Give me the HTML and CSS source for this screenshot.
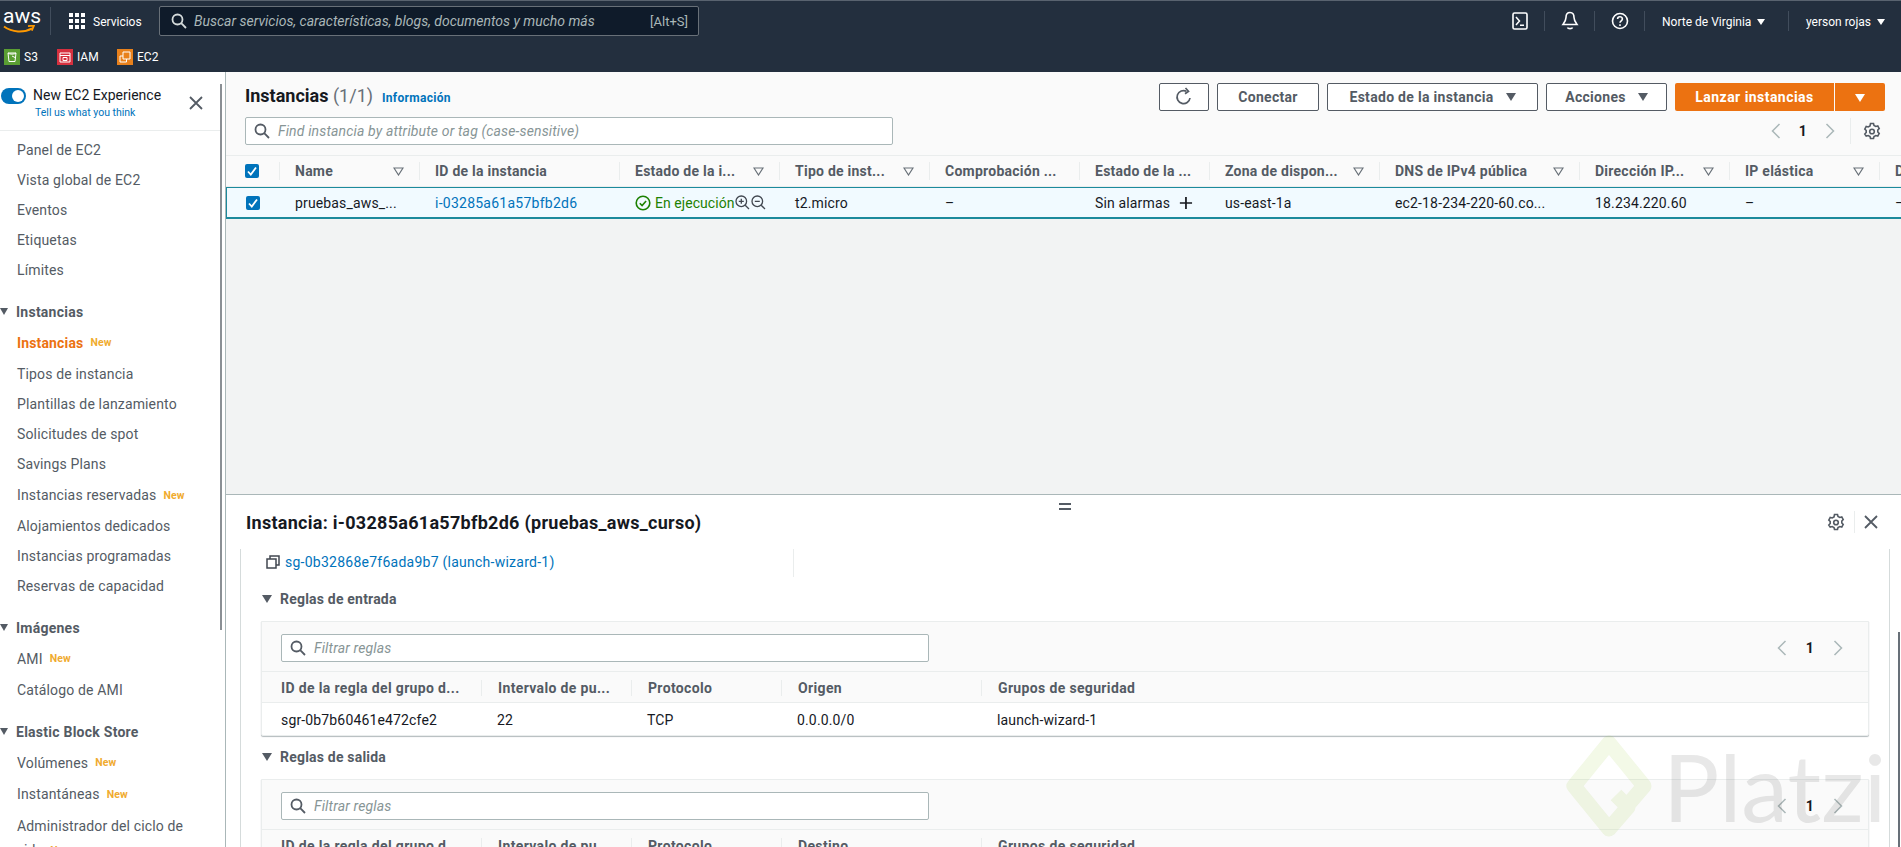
FILE: index.html
```html
<!DOCTYPE html>
<html lang="es">
<head>
    <meta charset="UTF-8">
    <title>Instancias | EC2 Management Console</title>
    <link rel="stylesheet" href="styles.css">
</head>
<body>
    <header class="topnav">
        <div class="nav-main">
            <div class="aws-logo">
                <span class="aws-word">aws</span>
                <svg class="aws-smile" width="32" height="9" viewBox="0 0 32 9"><path d="M1 1.500c8 6 20 6.500 28 1.800" fill="none" stroke="#f90" stroke-width="2"/><path d="M25 1.200l6-.7-2.200 5.200" fill="none" stroke="#f90" stroke-width="1.800"/></svg>
            </div>
            <div class="nav-services">
                <svg width="16" height="16" viewBox="0 0 16 16" fill="#fff"><rect width="4" height="4"/><rect x="6" width="4" height="4"/><rect x="12" width="4" height="4"/><rect y="6" width="4" height="4"/><rect x="6" y="6" width="4" height="4"/><rect x="12" y="6" width="4" height="4"/><rect y="12" width="4" height="4"/><rect x="6" y="12" width="4" height="4"/><rect x="12" y="12" width="4" height="4"/></svg>
                <span>Servicios</span>
            </div>
            <div class="nav-search">
                <svg width="16" height="16" viewBox="0 0 16 16" fill="none" stroke="#d5dbdb" stroke-width="1.800"><circle cx="6.500" cy="6.500" r="5"/><path d="M10.200 10.200L15 15"/></svg>
                <span class="nav-search-text">Buscar servicios, características, blogs, documentos y mucho más</span>
                <span class="nav-search-key">[Alt+S]</span>
            </div>
            <div class="nav-right">
                <div class="nav-icon">
                    <svg width="16" height="18" viewBox="0 0 16 18" fill="none" stroke="#fff"><rect x="1" y="1" width="14" height="16" rx="1.500" stroke-width="1.600"/><path d="M4 5l3.500 4L4 13M8 13.300h4" stroke-width="1.500"/></svg>
                </div>
                <div class="nav-icon">
                    <svg width="18" height="20" viewBox="0 0 18 20" fill="none" stroke="#fff" stroke-width="1.600"><path d="M9 1.500c-3 0-4 2.500-4 5 0 3-1.500 5-3 7h14c-1.500-2-3-4-3-7 0-2.500-1-5-4-5z"/><path d="M6.500 16.500c.5 1.500 4.500 1.500 5 0"/></svg>
                </div>
                <div class="nav-icon">
                    <svg width="18" height="18" viewBox="0 0 18 18" fill="none" stroke="#fff" stroke-width="1.600"><circle cx="9" cy="9" r="7.500"/><path d="M6.600 7c0-3 4.800-3 4.800 0 0 1.800-2.400 1.800-2.400 3.800"/><path d="M9 12.300v1.600"/></svg>
                </div>
                <div class="nav-menu nav-region">Norte de Virginia<i class="tri tri-white"></i></div>
                <div class="nav-menu nav-user">yerson rojas<i class="tri tri-white"></i></div>
            </div>
        </div>
        <div class="nav-shortcuts">
            <div class="shortcut">
                <svg width="16" height="16" viewBox="0 0 16 16"><rect width="16" height="16" fill="#5a9e33"/><path d="M4 4h8l-1 8.500H5zM4 4c1 1.500 7 1.500 8 0M8 7l4 2" fill="none" stroke="#fff"/></svg>
                <span>S3</span>
            </div>
            <div class="shortcut shortcut-iam">
                <svg width="16" height="16" viewBox="0 0 16 16"><rect width="16" height="16" fill="#d6303f"/><path d="M3 4h10v9H3zM3 6.500h10M6 8.500h4v3H6z" fill="none" stroke="#fff"/></svg>
                <span>IAM</span>
            </div>
            <div class="shortcut shortcut-ec2">
                <svg width="16" height="16" viewBox="0 0 16 16"><rect width="16" height="16" fill="#e8811c"/><path d="M6 3h7v7H6zM9.500 10v3H3V7h3" fill="none" stroke="#fff"/></svg>
                <span>EC2</span>
            </div>
        </div>
    </header>

    <div class="app">
        <aside class="sidebar">
            <div class="side-head">
                <i class="toggle"></i>
                <div class="side-head-text">
                    <div class="side-title">New EC2 Experience</div>
                    <div class="side-sub">Tell us what you think</div>
                </div>
                <svg class="side-close" width="14" height="14" viewBox="0 0 14 14" fill="none" stroke="#545b64" stroke-width="1.800"><path d="M1 1l12 12M13 1L1 13"/></svg>
            </div>
            <nav class="side-nav">
                <a class="item">Panel de EC2</a>
                <a class="item">Vista global de EC2</a>
                <a class="item">Eventos</a>
                <a class="item">Etiquetas</a>
                <a class="item">Límites</a>
                <div class="group"><i class="tri tri-side"></i>Instancias</div>
                <a class="item item-new active">Instancias<b class="new">New</b></a>
                <a class="item item-new">Tipos de instancia</a>
                <a class="item">Plantillas de lanzamiento</a>
                <a class="item">Solicitudes de spot</a>
                <a class="item">Savings Plans</a>
                <a class="item item-tall">Instancias reservadas<b class="new">New</b></a>
                <a class="item">Alojamientos dedicados</a>
                <a class="item">Instancias programadas</a>
                <a class="item">Reservas de capacidad</a>
                <div class="group"><i class="tri tri-side"></i>Imágenes</div>
                <a class="item item-new">AMI<b class="new">New</b></a>
                <a class="item item-new">Catálogo de AMI</a>
                <div class="group"><i class="tri tri-side"></i>Elastic Block Store</div>
                <a class="item item-new">Volúmenes<b class="new">New</b></a>
                <a class="item item-tall">Instantáneas<b class="new">New</b></a>
                <a class="item item-new">Administrador del ciclo de</a>
                <a class="item item-wrap">vida<b class="new">New</b></a>
            </nav>
            <i class="side-scroll"></i>
        </aside>

        <main class="content">
            <section class="top-panel">
                <div class="list-head">
                    <div class="list-row">
                        <h1 class="list-title">Instancias <span class="count">(1/1)</span><a class="info">Información</a></h1>
                        <div class="actions">
                            <button class="btn btn-icon">
                                <svg width="18" height="20" viewBox="0 0 18 20" fill="none" stroke="#545b64" stroke-width="1.700"><path d="M15 11a6.500 6.500 0 1 1-3.500-6.700"/><path d="M10.500 1l3 3.300-3.500 2.500"/></svg>
                            </button>
                            <button class="btn btn-conectar">Conectar</button>
                            <button class="btn btn-estado">Estado de la instancia<i class="tri tri-btn"></i></button>
                            <button class="btn btn-acciones">Acciones<i class="tri tri-btn"></i></button>
                            <div class="launch">
                                <button class="btn-launch">Lanzar instancias</button>
                                <button class="btn-launch-arrow"><i class="tri tri-btn tri-white"></i></button>
                            </div>
                        </div>
                    </div>
                    <div class="list-row list-row-2">
                        <div class="filter filter-main">
                            <svg width="16" height="16" viewBox="0 0 16 16" fill="none" stroke="#545b64" stroke-width="1.800"><circle cx="6.500" cy="6.500" r="5"/><path d="M10.200 10.200L15 15"/></svg>
                            <span>Find instancia by attribute or tag (case-sensitive)</span>
                        </div>
                        <div class="pager pager-main">
                            <svg class="chev" width="10" height="16" viewBox="0 0 10 16"><path d="M8.500 1L1.500 8l7 7"/></svg>
                            <b>1</b>
                            <svg class="chev" width="10" height="16" viewBox="0 0 10 16"><path d="M1.500 1l7 7-7 7"/></svg>
                            <i class="pager-sep"></i>
                            <svg width="18" height="18" viewBox="0 0 18 18" fill="none" stroke="#545b64" stroke-width="1.600"><path d="M7.500 1.500h3l.5 2 1.800 1 2-.6 1.400 2.600-1.400 1.500v2l1.400 1.500-1.400 2.600-2-.6-1.800 1-.5 2h-3l-.5-2-1.800-1-2 .6L1.800 12l1.400-1.500v-2L1.800 7l1.400-2.600 2 .6 1.800-1z"/><circle cx="9" cy="9.500" r="2.300"/></svg>
                        </div>
                    </div>
                </div>
                <div class="grid-table">
                    <div class="tr thead">
                        <div class="td td-check"><svg class="check" width="14" height="14" viewBox="0 0 14 14"><rect width="14" height="14" rx="2" fill="#0073bb"/><path d="M3 7.500l2.800 3L11 3.500" fill="none" stroke="#fff" stroke-width="1.800"/></svg></div>
                        <div class="td sortable"><span>Name</span><svg class="sort" width="11" height="9" viewBox="0 0 11 9"><path d="M1 1h9L5.500 8z"/></svg></div>
                        <div class="td"><span>ID de la instancia</span></div>
                        <div class="td sortable"><span>Estado de la i...</span><svg class="sort" width="11" height="9" viewBox="0 0 11 9"><path d="M1 1h9L5.500 8z"/></svg></div>
                        <div class="td sortable"><span>Tipo de inst...</span><svg class="sort" width="11" height="9" viewBox="0 0 11 9"><path d="M1 1h9L5.500 8z"/></svg></div>
                        <div class="td"><span>Comprobación ...</span></div>
                        <div class="td"><span>Estado de la ...</span></div>
                        <div class="td sortable"><span>Zona de dispon...</span><svg class="sort" width="11" height="9" viewBox="0 0 11 9"><path d="M1 1h9L5.500 8z"/></svg></div>
                        <div class="td sortable"><span>DNS de IPv4 pública</span><svg class="sort" width="11" height="9" viewBox="0 0 11 9"><path d="M1 1h9L5.500 8z"/></svg></div>
                        <div class="td sortable"><span>Dirección IP...</span><svg class="sort" width="11" height="9" viewBox="0 0 11 9"><path d="M1 1h9L5.500 8z"/></svg></div>
                        <div class="td sortable"><span>IP elástica</span><svg class="sort" width="11" height="9" viewBox="0 0 11 9"><path d="M1 1h9L5.500 8z"/></svg></div>
                        <div class="td"><span>D</span></div>
                    </div>
                    <div class="tr selected">
                        <div class="td td-check"><svg class="check" width="14" height="14" viewBox="0 0 14 14"><rect width="14" height="14" rx="2" fill="#0073bb"/><path d="M3 7.500l2.800 3L11 3.500" fill="none" stroke="#fff" stroke-width="1.800"/></svg></div>
                        <div class="td"><span>pruebas_aws_...</span></div>
                        <div class="td"><a class="link">i-03285a61a57bfb2d6</a></div>
                        <div class="td td-status">
                            <svg width="16" height="16" viewBox="0 0 16 16" fill="none" stroke="#1d8102" stroke-width="1.600"><circle cx="8" cy="8" r="6.800"/><path d="M4.800 8.200l2.300 2.400 4-4.600"/></svg>
                            <span class="running">En ejecución</span>
                            <svg class="zoom-icon" width="15" height="15" viewBox="0 0 15 15" fill="none" stroke="#414750" stroke-width="1.300"><circle cx="6.300" cy="6.300" r="5.300"/><path d="M10.200 10.200L14 14M3.800 6.300h5M6.300 3.800v5"/></svg>
                            <svg class="zoom-icon" width="15" height="15" viewBox="0 0 15 15" fill="none" stroke="#414750" stroke-width="1.300"><circle cx="6.300" cy="6.300" r="5.300"/><path d="M10.200 10.200L14 14M3.800 6.300h5"/></svg>
                        </div>
                        <div class="td"><span>t2.micro</span></div>
                        <div class="td"><span>–</span></div>
                        <div class="td td-alarm"><span>Sin alarmas</span><svg width="16" height="16" viewBox="0 0 16 16" stroke="#16191f" stroke-width="2"><path d="M8 1v14M1 8h14"/></svg></div>
                        <div class="td"><span>us-east-1a</span></div>
                        <div class="td"><span>ec2-18-234-220-60.co...</span></div>
                        <div class="td"><span>18.234.220.60</span></div>
                        <div class="td"><span>–</span></div>
                        <div class="td"><span>–</span></div>
                    </div>
                </div>
            </section>

            <section class="detail">
                <div class="split-handle"></div>
                <div class="detail-head">
                    <h2 class="detail-title">Instancia: i-03285a61a57bfb2d6 (pruebas_aws_curso)</h2>
                    <div class="detail-tools">
                        <svg width="18" height="18" viewBox="0 0 18 18" fill="none" stroke="#545b64" stroke-width="1.600"><path d="M7.500 1.500h3l.5 2 1.800 1 2-.6 1.400 2.600-1.400 1.500v2l1.400 1.500-1.400 2.600-2-.6-1.800 1-.5 2h-3l-.5-2-1.800-1-2 .6L1.800 12l1.400-1.500v-2L1.800 7l1.400-2.600 2 .6 1.800-1z"/><circle cx="9" cy="9.500" r="2.300"/></svg>
                        <i class="tools-sep"></i>
                        <svg width="14" height="14" viewBox="0 0 14 14" fill="none" stroke="#545b64" stroke-width="1.800"><path d="M1 1l12 12M13 1L1 13"/></svg>
                    </div>
                </div>
                <div class="detail-body">
                    <div class="sg-row">
                        <div class="sg-cell">
                            <svg width="14" height="14" viewBox="0 0 14 14" fill="none" stroke="#414750" stroke-width="1.500"><rect x="1" y="4" width="9" height="9"/><path d="M4 4V1h9v9h-3"/></svg>
                            <a class="link">sg-0b32868e7f6ada9b7 (launch-wizard-1)</a>
                        </div>
                    </div>

                    <div class="rules-title"><i class="tri tri-btn"></i>Reglas de entrada</div>
                    <div class="rules-card">
                        <div class="rules-tool">
                            <div class="filter filter-rules">
                                <svg width="16" height="16" viewBox="0 0 16 16" fill="none" stroke="#545b64" stroke-width="1.800"><circle cx="6.500" cy="6.500" r="5"/><path d="M10.200 10.200L15 15"/></svg>
                                <span>Filtrar reglas</span>
                            </div>
                            <div class="pager pager-rules">
                                <svg class="chev" width="10" height="16" viewBox="0 0 10 16"><path d="M8.500 1L1.500 8l7 7"/></svg>
                                <b>1</b>
                                <svg class="chev" width="10" height="16" viewBox="0 0 10 16"><path d="M1.500 1l7 7-7 7"/></svg>
                            </div>
                        </div>
                        <div class="rules-tr rules-head">
                            <div class="rules-td">ID de la regla del grupo d...</div>
                            <div class="rules-td">Intervalo de pu...</div>
                            <div class="rules-td">Protocolo</div>
                            <div class="rules-td">Origen</div>
                            <div class="rules-td">Grupos de seguridad</div>
                        </div>
                        <div class="rules-tr">
                            <div class="rules-td">sgr-0b7b60461e472cfe2</div>
                            <div class="rules-td">22</div>
                            <div class="rules-td">TCP</div>
                            <div class="rules-td">0.0.0.0/0</div>
                            <div class="rules-td">launch-wizard-1</div>
                        </div>
                    </div>

                    <div class="rules-title"><i class="tri tri-btn"></i>Reglas de salida</div>
                    <div class="rules-card">
                        <div class="rules-tool">
                            <div class="filter filter-rules">
                                <svg width="16" height="16" viewBox="0 0 16 16" fill="none" stroke="#545b64" stroke-width="1.800"><circle cx="6.500" cy="6.500" r="5"/><path d="M10.200 10.200L15 15"/></svg>
                                <span>Filtrar reglas</span>
                            </div>
                            <div class="pager pager-rules">
                                <svg class="chev" width="10" height="16" viewBox="0 0 10 16"><path d="M8.500 1L1.500 8l7 7"/></svg>
                                <b>1</b>
                                <svg class="chev" width="10" height="16" viewBox="0 0 10 16"><path d="M1.500 1l7 7-7 7"/></svg>
                            </div>
                        </div>
                        <div class="rules-tr rules-head">
                            <div class="rules-td">ID de la regla del grupo d...</div>
                            <div class="rules-td">Intervalo de pu...</div>
                            <div class="rules-td">Protocolo</div>
                            <div class="rules-td">Destino</div>
                            <div class="rules-td">Grupos de seguridad</div>
                        </div>
                    </div>
                </div>
                <i class="detail-scroll"></i>
            </section>
        </main>
    </div>

    <div class="watermark">
        <svg class="watermark-logo" width="88" height="106" viewBox="0 0 88 106" fill="none" stroke="#98c83a" stroke-width="15" stroke-linejoin="round"><path d="M61 74L79 53 44 10 9 53 44 96 63 74 51 62"/></svg>
        <span>Platzi</span>
    </div>
</body>
</html>
```

FILE: styles.css
```css
* {
    box-sizing: border-box;
}
html, body {
    height: 100%;
}
body {
    margin: 0;
    overflow: hidden;
    font-family: 'Roboto', 'Liberation Sans', sans-serif;
    font-size: 14px;
    letter-spacing: 0.15px;
    color: #16191f;
    background-color: #fff;
    display: flex;
    flex-direction: column;
}
h1, h2 {
    margin: 0;
}
button {
    font-family: inherit;
}
.tri {
    display: inline-block;
    border-left: 5px solid transparent;
    border-right: 5px solid transparent;
    border-top: 8px solid #545b64;
}

/* top navigation */
.topnav {
    height: 72px;
    flex: none;
    background-color: #232f3e;
    border-top: 1px solid #59636f;
    color: #fff;
    letter-spacing: 0;
}
.nav-main {
    height: 40px;
    display: flex;
    align-items: center;
}
.aws-logo {
    width: 51px;
    height: 28px;
    padding-left: 3px;
    border-right: 1px solid #414d5c;
    position: relative;
}
.aws-word {
    display: block;
    font-size: 21px;
    line-height: 20px;
    margin-top: -1px;
}
.aws-smile {
    display: block;
    margin-top: -1px;
}
.nav-services {
    width: 90px;
    margin-left: 18px;
    display: flex;
    align-items: center;
    gap: 8px;
    font-size: 12px;
}
.nav-services span {
    padding-top: 1px;
}
.nav-search {
    width: 540px;
    height: 30px;
    background-color: #0f1b2a;
    border: 1px solid #687078;
    border-radius: 2px;
    display: flex;
    align-items: center;
    padding: 0 10px 0 11px;
    color: #aab7b8;
    font-size: 14px;
}
.nav-search-text {
    margin-left: 7px;
    font-style: italic;
    flex: 1;
}
.nav-search-key {
    font-size: 13px;
}
.nav-right {
    margin-left: auto;
    display: flex;
    align-items: center;
    height: 20px;
}
.nav-icon {
    width: 50px;
    height: 20px;
    display: flex;
    align-items: center;
    justify-content: center;
    border-right: 1px solid #414d5c;
}
.nav-menu {
    display: flex;
    align-items: center;
    font-size: 12px;
    padding-top: 1px;
}
.nav-menu .tri {
    border-left-width: 4px;
    border-right-width: 4px;
    border-top-width: 6px;
}
.tri-white {
    border-top-color: #fff;
}
.nav-region {
    width: 144px;
    height: 20px;
    padding-left: 17px;
    gap: 6px;
    border-right: 1px solid #414d5c;
}
.nav-user {
    width: 112px;
    padding-left: 17px;
    gap: 6px;
}
.nav-shortcuts {
    height: 31px;
    display: flex;
    align-items: center;
    padding-left: 4px;
    font-size: 12px;
}
.shortcut {
    display: flex;
    align-items: center;
    gap: 4px;
    width: 53px;
}
.shortcut-iam {
    width: 60px;
}

/* layout */
.app {
    flex: 1;
    display: flex;
    min-height: 0;
}
.sidebar {
    width: 226px;
    flex: none;
    border-right: 1px solid #aab7b8;
    position: relative;
    overflow: hidden;
    background-color: #fff;
}
.side-head {
    height: 59px;
    width: 222px;
    display: flex;
    padding-top: 15px;
    border-bottom: 1px solid #eaeded;
}
.toggle {
    width: 25px;
    height: 16px;
    margin: 1px 0 0 1px;
    border-radius: 8px;
    background-color: #0073bb;
    position: relative;
    flex: none;
}
.toggle::after {
    content: "";
    position: absolute;
    right: 2px;
    top: 2px;
    width: 12px;
    height: 12px;
    border-radius: 50%;
    background-color: #fff;
}
.side-head-text {
    margin-left: 7px;
    width: 156px;
}
.side-title {
    font-size: 14px;
    line-height: 17px;
    letter-spacing: 0;
    color: #16191f;
}
.side-sub {
    margin: 2px 0 0 2px;
    font-size: 10.5px;
    line-height: 14px;
    letter-spacing: 0;
    color: #0073bb;
}
.side-close {
    margin-top: 9px;
}
.side-nav {
    padding-top: 4px;
    display: flex;
    flex-direction: column;
}
.item {
    height: 30px;
    flex: none;
    display: flex;
    align-items: center;
    padding-left: 17px;
    color: #545b64;
    white-space: nowrap;
}
.item-new {
    height: 31px;
}
.item-tall {
    height: 32px;
}
.item-wrap {
    height: 18px;
}
.item.active {
    color: #ec7211;
    font-weight: 700;
}
.new {
    margin-left: 7px;
    font-size: 10.5px;
    font-weight: 700;
    color: #f0ab2f;
}
.group {
    height: 30px;
    flex: none;
    margin-top: 12px;
    display: flex;
    align-items: center;
    padding-left: 16px;
    font-weight: 700;
    letter-spacing: 0.25px;
    color: #545b64;
    position: relative;
}
.tri-side {
    position: absolute;
    left: 0;
    top: 11px;
    border-left-width: 4px;
    border-right-width: 4px;
    border-top-width: 7px;
}
.side-scroll {
    position: absolute;
    right: 3px;
    top: 12px;
    width: 2px;
    height: 546px;
    background-color: #8a8f94;
}

/* instance list */
.content {
    flex: 1;
    min-width: 0;
    display: flex;
    flex-direction: column;
}
.top-panel {
    height: 423px;
    flex: none;
    background-color: #f2f3f3;
    border-bottom: 1px solid #aab7b8;
    overflow: hidden;
}
.list-head {
    height: 83px;
    background-color: #fafafa;
    padding: 11px 16px 0 19px;
}
.list-row {
    display: flex;
    justify-content: space-between;
    align-items: flex-start;
}
.list-row-2 {
    margin-top: 6px;
}
.list-title {
    font-size: 18px;
    font-weight: 700;
    line-height: 26px;
    letter-spacing: 0;
}
.count {
    font-weight: 400;
    color: #687078;
}
.info {
    margin-left: 9px;
    font-size: 12px;
    letter-spacing: 0.3px;
    color: #0073bb;
}
.actions {
    display: flex;
    gap: 8px;
}
.btn {
    height: 28px;
    background-color: #fff;
    border: 1px solid #545b64;
    border-radius: 2px;
    color: #545b64;
    font-size: 14px;
    font-weight: 700;
    letter-spacing: 0.3px;
    display: flex;
    align-items: center;
    justify-content: center;
    padding: 0;
}
.btn-icon {
    width: 50px;
}
.btn-conectar {
    width: 102px;
}
.btn-estado {
    width: 211px;
    gap: 12px;
}
.btn-acciones {
    width: 121px;
    gap: 12px;
}
.tri-btn {
    border-left-width: 5px;
    border-right-width: 5px;
    border-top-width: 8px;
}
.launch {
    display: flex;
    gap: 1px;
}
.btn-launch {
    width: 159px;
    height: 28px;
    border: none;
    border-radius: 2px 0 0 2px;
    background-color: #ec7211;
    color: #fff;
    font-size: 14px;
    font-weight: 700;
    letter-spacing: 0.45px;
}
.btn-launch-arrow {
    width: 50px;
    height: 28px;
    border: none;
    border-radius: 0 2px 2px 0;
    background-color: #ec7211;
}
.filter {
    height: 28px;
    background-color: #fff;
    border: 1px solid #aab7b8;
    border-radius: 2px;
    display: flex;
    align-items: center;
    gap: 8px;
    padding-left: 8px;
    color: #879596;
    font-style: italic;
}
.filter-main {
    width: 648px;
}
.filter-rules {
    width: 648px;
}
.pager {
    display: flex;
    align-items: center;
    color: #16191f;
}
.chev {
    fill: none;
    stroke: #aab7b8;
    stroke-width: 1.500;
}
.pager-main {
    height: 28px;
    gap: 18px;
    margin-right: 4px;
}
.pager-sep {
    width: 1px;
    height: 26px;
    background-color: #eaeded;
    margin-right: -6px;
    margin-left: -3px;
}
.pager-rules {
    height: 28px;
    gap: 19px;
    margin-right: 25px;
}

/* table */
.grid-table {
    width: 1740px;
}
.tr {
    display: grid;
    grid-template-columns: 53px 140px 200px 160px 150px 150px 130px 170px 200px 150px 150px 150px;
    align-items: center;
}
.thead {
    height: 32px;
    background-color: #fafafa;
    border-top: 1px solid #eaeded;
    border-bottom: 1px solid #eaeded;
    font-weight: 700;
    letter-spacing: 0.25px;
    color: #545b64;
}
.thead .td + .td {
    border-left: 1px solid #eaeded;
    padding-left: 15px;
}
.td {
    height: 18px;
    padding: 0 16px;
    display: flex;
    align-items: center;
    white-space: nowrap;
    overflow: hidden;
}
.td-check {
    padding: 0 0 0 19px;
    overflow: visible;
}
.sortable {
    justify-content: space-between;
    padding-right: 15px;
}
.sort {
    fill: none;
    stroke: #687078;
    stroke-width: 1.200;
    flex: none;
}
.selected {
    height: 32px;
    background-color: #f1faff;
    border-top: 1px solid #1c8a9c;
    border-bottom: 2px solid #1c8a9c;
    border-left: 1px solid #1c8a9c;
    grid-template-columns: 52px 140px 200px 160px 150px 150px 130px 170px 200px 150px 150px 150px;
}
.td-status {
    gap: 4px;
    padding-right: 0;
    height: 20px;
}
.running {
    color: #1d8102;
    letter-spacing: 0.05px;
    margin-right: -3px;
}
.zoom-icon {
    flex: none;
}
.td-status .zoom-icon + .zoom-icon {
    margin-left: -3px;
}
.td-alarm {
    gap: 9px;
}
.link {
    color: #0073bb;
    letter-spacing: 0.25px;
}

/* detail panel */
.detail {
    flex: 1;
    min-height: 0;
    position: relative;
    overflow: hidden;
    background-color: #fff;
}
.split-handle {
    position: absolute;
    left: 833px;
    top: 8px;
    width: 12px;
    height: 7px;
    border-top: 2px solid #545b64;
    border-bottom: 2px solid #545b64;
}
.detail-head {
    height: 54px;
    display: flex;
    align-items: center;
    justify-content: space-between;
    padding: 0 23px 0 20px;
}
.detail-title {
    font-size: 18px;
    font-weight: 700;
    letter-spacing: 0.28px;
}
.detail-tools {
    display: flex;
    align-items: center;
    gap: 9px;
}
.tools-sep {
    width: 1px;
    height: 22px;
    background-color: #eaeded;
}
.detail-body {
    margin: 0 11px 0 14px;
    padding: 0 20px 0 20px;
    border-left: 1px solid #d5dbdb;
    border-right: 1px solid #d5dbdb;
    height: 400px;
}
.sg-row {
    height: 29px;
}
.sg-cell {
    width: 533px;
    height: 28px;
    border-right: 1px solid #eaeded;
    display: flex;
    align-items: center;
    gap: 5px;
    padding: 0 0 2px 5px;
}
.rules-title {
    height: 43px;
    padding-bottom: 1px;
    display: flex;
    align-items: center;
    gap: 8px;
    padding-left: 1px;
    font-weight: 700;
    letter-spacing: 0.2px;
    color: #545b64;
}
.rules-card {
    background-color: #fff;
    border: 1px solid #eaeded;
    box-shadow: 0 1px 1px 0 rgba(0, 28, 36, 0.3);
    border-radius: 0 0 2px 2px;
}
.rules-tool {
    height: 50px;
    background-color: #fafafa;
    border-bottom: 1px solid #eaeded;
    padding: 12px 0 0 19px;
    display: flex;
    justify-content: space-between;
}
.rules-tr {
    height: 32px;
    display: grid;
    grid-template-columns: 219px 150px 150px 200px 1fr;
    align-items: center;
    padding-top: 1px;
}
.rules-head {
    height: 31px;
    background-color: #fafafa;
    border-bottom: 1px solid #eaeded;
    font-weight: 700;
    letter-spacing: 0.35px;
    color: #545b64;
}
.rules-td {
    padding-left: 16px;
    white-space: nowrap;
}
.rules-td:first-child {
    padding-left: 19px;
}
.rules-head .rules-td + .rules-td {
    border-left: 1px solid #eaeded;
}
.detail-scroll {
    position: absolute;
    right: 1px;
    top: 137px;
    width: 2px;
    bottom: 0;
    background-color: #687078;
}

/* logo stamped over the photo */
.watermark {
    position: fixed;
    left: 1565px;
    top: 733px;
    display: flex;
    align-items: center;
    gap: 10px;
    pointer-events: none;
}
.watermark-logo {
    opacity: 0.12;
}
.watermark span {
    font-family: 'Lato', sans-serif;
    font-size: 94px;
    line-height: 106px;
    letter-spacing: 0;
    color: #444;
    opacity: 0.12;
}
```
